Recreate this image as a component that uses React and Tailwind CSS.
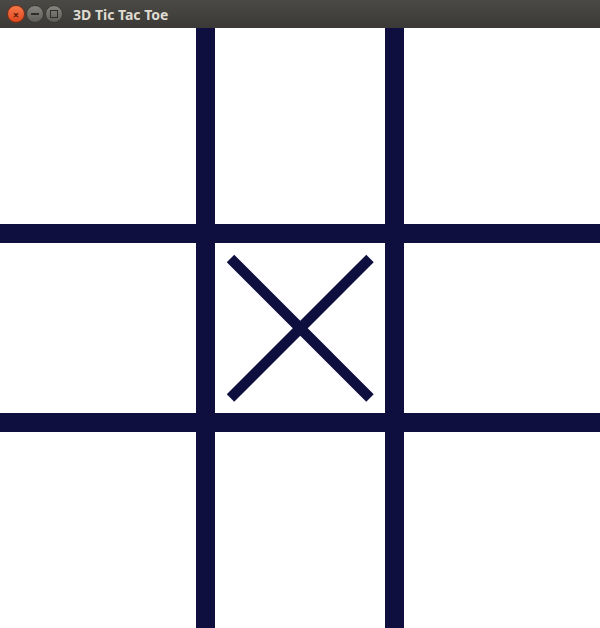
export default function App() {
    const cells = Array.from({ length: 9 }, (_, i) => i);

    return (
        <div className="flex h-[628px] w-[600px] flex-col bg-white">
            <div className="flex h-[28px] items-center bg-gradient-to-b from-[#4a4945] to-[#3b3a36] pl-[7px] [font-family:'Noto_Sans',sans-serif]">
                <div className="flex items-center gap-[1px]">
                    <span className="flex h-[18px] w-[18px] items-center justify-center rounded-full border border-[#7a2e15] bg-gradient-to-b from-[#f7784a] to-[#e0461c] text-[11px] font-bold leading-none text-[#5c1c08]">
                        ×
                    </span>
                    <span className="flex h-[18px] w-[18px] items-center justify-center rounded-full border border-[#3a3935] bg-gradient-to-b from-[#86857f] to-[#5e5d58]">
                        <span className="h-[2px] w-[8px] bg-[#2f2e2b]" />
                    </span>
                    <span className="flex h-[18px] w-[18px] items-center justify-center rounded-full border border-[#3a3935] bg-gradient-to-b from-[#86857f] to-[#5e5d58]">
                        <span className="h-[8px] w-[8px] border-[1.5px] border-[#2f2e2b]" />
                    </span>
                </div>
                <span className="ml-[10px] text-[14px] font-bold text-[#dfdbd2]">3D Tic Tac Toe</span>
            </div>
            <div className="grid h-[600px] w-[600px] grid-cols-[196px_170px_196px] grid-rows-[196px_170px_196px] gap-[19px] bg-[#0f0f3f]">
                {cells.map((i) => (
                    <div key={i} className="bg-white">
                        {i === 4 && (
                            <svg width="170" height="170" viewBox="0 0 170 170">
                                <line x1="15.5" y1="15.5" x2="155" y2="155" stroke="#0f0f3f" strokeWidth="10.5" />
                                <line x1="155" y1="15.5" x2="15.5" y2="155" stroke="#0f0f3f" strokeWidth="10.5" />
                            </svg>
                        )}
                    </div>
                ))}
            </div>
        </div>
    );
}
